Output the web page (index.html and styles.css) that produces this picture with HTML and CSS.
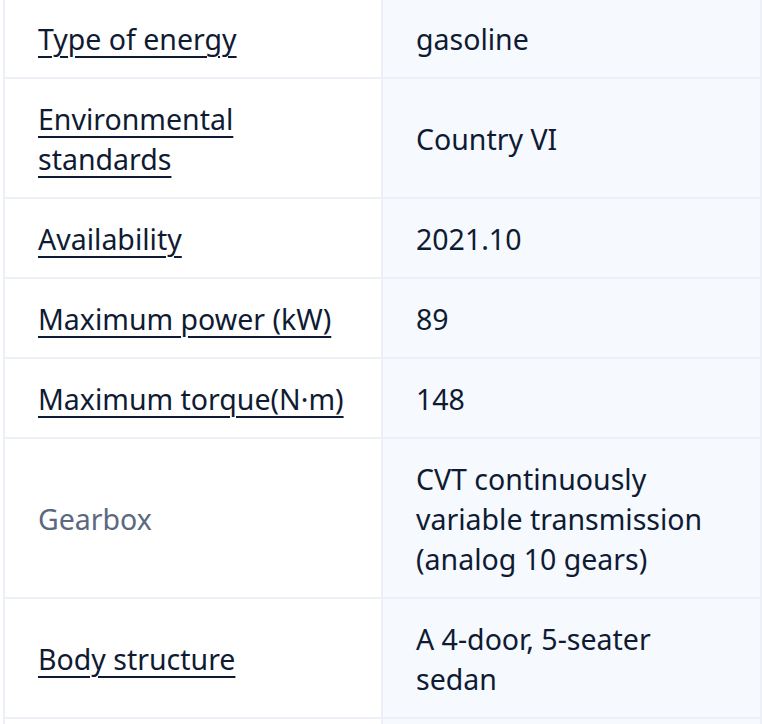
FILE: index.html
```html
<!DOCTYPE html>
<html>
<head>
<meta charset="utf-8">
<link rel="stylesheet" href="styles.css">
</head>
<body>
<div class="spec">
  <div class="row"><div class="key"><a class="link" href="#">Type of energy</a></div><div class="val">gasoline</div></div>
  <div class="row"><div class="key"><a class="link" href="#">Environmental standards</a></div><div class="val">Country VI</div></div>
  <div class="row"><div class="key"><a class="link" href="#">Availability</a></div><div class="val">2021.10</div></div>
  <div class="row"><div class="key"><a class="link" href="#">Maximum power (kW)</a></div><div class="val">89</div></div>
  <div class="row"><div class="key"><a class="link" href="#">Maximum torque(N·m)</a></div><div class="val">148</div></div>
  <div class="row"><div class="key plain">Gearbox</div><div class="val">CVT continuously variable transmission (analog 10 gears)</div></div>
  <div class="row"><div class="key"><a class="link" href="#">Body structure</a></div><div class="val">A 4-door, 5-seater sedan</div></div>
  <div class="row last"><div class="key empty"></div><div class="val empty"></div></div>
</div>
</body>
</html>
```
FILE: styles.css
```css
html, body {
  margin: 0;
  padding: 0;
  background: #ffffff;
  overflow: hidden;
}
body {
  font-family: "Noto Sans", "Open Sans", sans-serif;
  font-size: 28.5px;
  line-height: 40px;
  color: #0f1b33;
}
.spec {
  margin: -3px 0 0 3px;
  border-top: 2px solid #edf1f7;
  border-left: 2px solid #edf1f7;
  border-right: 2px solid #edf1f7;
  width: 759px;
  box-sizing: border-box;
}
.row {
  display: grid;
  grid-template-columns: 376px 1fr;
  border-bottom: 2px solid #edf1f7;
}
.row.last {
  border-bottom: 0;
}
.key {
  padding: 20px 33px 18px;
  display: flex;
  align-items: center;
}
.val {
  padding: 20px 33px 18px;
  background: #f6f9fe;
  border-left: 2px solid #edf1f7;
  display: flex;
  align-items: center;
}
.empty {
  padding: 0;
  height: 5px;
}
.link {
  color: #0f1b33;
  text-decoration: underline;
  text-decoration-thickness: 2px;
  text-underline-offset: 6px;
}
.plain {
  color: #5b6880;
}
```
